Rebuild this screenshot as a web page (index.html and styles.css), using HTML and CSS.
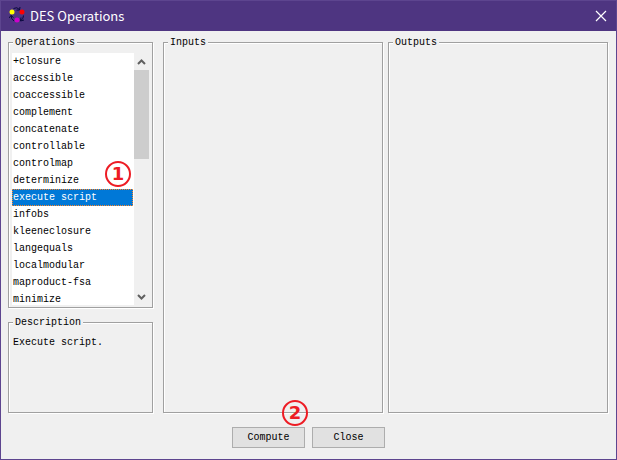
FILE: index.html
```html
<!DOCTYPE html>
<html lang="en">
<head>
<meta charset="utf-8">
<title>DES Operations</title>
<link rel="stylesheet" href="styles.css">
</head>
<body>
<div class="window">
  <header class="titlebar">
    <svg class="app-icon" viewBox="0 0 18 18" width="18" height="18" aria-hidden="true">
      <g fill="none" stroke="#08083c" stroke-width="1">
        <path d="M4.500 1.500Q8 -0.500 10.500 2.500M11 0L10.500 3L7.500 3"/>
        <path d="M14.500 8.500Q14.500 11.500 12 13.500M15 13L11.500 14L12 10.500"/>
        <path d="M5 14Q2 12 2 8.500M0 11L2 8.500L4.500 10.500"/>
      </g>
      <circle cx="3" cy="5" r="2.500" fill="#ffff00"/>
      <circle cx="13" cy="5" r="2.500" fill="#ff0000"/>
      <circle cx="8" cy="13" r="2.500" fill="#cc00cc"/>
    </svg>
    <h1 class="title">DES Operations</h1>
    <button class="close" type="button" aria-label="Close window">
      <svg viewBox="0 0 12 12" width="12" height="12"><path d="M1 1L11 11M11 1L1 11" stroke="#fff" stroke-width="1.200" fill="none"/></svg>
    </button>
  </header>
  <main class="content">
    <div class="panels">
      <div class="sidebar">
        <fieldset class="group operations">
          <legend><label for="ops">Operations</label></legend>
          <div class="list-row">
            <select class="list" id="ops" size="15">
              <option>+closure</option>
              <option>accessible</option>
              <option>coaccessible</option>
              <option>complement</option>
              <option>concatenate</option>
              <option>controllable</option>
              <option>controlmap</option>
              <option>determinize</option>
              <option class="current" selected>execute script</option>
              <option>infobs</option>
              <option>kleeneclosure</option>
              <option>langequals</option>
              <option>localmodular</option>
              <option>maproduct-fsa</option>
              <option>minimize</option>
            </select>
            <div class="scrollbar">
              <button class="arrow" type="button" aria-label="Scroll up">
                <svg viewBox="0 0 9 6" width="9" height="6"><path d="M1 5L4.500 1.500L8 5" fill="none" stroke="#606060" stroke-width="2"/></svg>
              </button>
              <div class="track"><div class="thumb"></div></div>
              <button class="arrow" type="button" aria-label="Scroll down">
                <svg viewBox="0 0 9 6" width="9" height="6"><path d="M1 1L4.500 4.500L8 1" fill="none" stroke="#606060" stroke-width="2"/></svg>
              </button>
            </div>
            <span class="marker marker-list">1</span>
          </div>
        </fieldset>
        <fieldset class="group description">
          <legend>Description</legend>
          <p class="text">Execute script.</p>
        </fieldset>
      </div>
      <div class="ports">
        <fieldset class="group"><legend>Inputs</legend></fieldset>
        <fieldset class="group"><legend>Outputs</legend></fieldset>
      </div>
    </div>
    <div class="actions">
      <button class="button" type="button">Compute<span class="marker marker-compute">2</span></button>
      <button class="button" type="button">Close</button>
    </div>
  </main>
</div>
</body>
</html>
```
FILE: styles.css
```css
* {
  box-sizing: border-box;
}

body {
  margin: 0;
  font: 10px/14px "Liberation Mono", monospace;
  color: #000;
}

button,
select {
  font: inherit;
  color: inherit;
}

.window {
  display: flex;
  flex-direction: column;
  min-height: 100vh;
  border: 1px solid #5d458f;
  background: #f0f0f0;
}

.titlebar {
  display: flex;
  align-items: center;
  height: 30px;
  padding: 0 9px 0 8px;
  background: #4e3581;
  color: #fff;
}

.app-icon {
  margin-right: 3px;
}

.title {
  flex: 1;
  margin: 0;
  font: 13px/20px "Noto Sans CJK SC", sans-serif;
}

.close {
  display: flex;
  padding: 0;
  border: 0;
  background: none;
}

.content {
  flex: 1;
  display: flex;
  flex-direction: column;
  gap: 14px;
  padding: 4px 7px 11px;
}

.panels {
  flex: 1;
  display: grid;
  grid-template-columns: 145px 1fr;
  gap: 10px;
}

.sidebar {
  display: flex;
  flex-direction: column;
  gap: 7px;
}

.ports {
  display: grid;
  grid-template-columns: 1fr 1fr;
  gap: 5px;
  padding-right: 1px;
}

.group {
  min-width: 0;
  margin: 0;
  padding: 4px 3px 2px;
  border: 1px solid #a0a0a0;
  box-shadow: 1px 1px #fff, inset 1px 1px #fff;
}

.group legend {
  margin-left: 1px;
  padding: 2px 2px 0;
  line-height: 12px;
  background: #f0f0f0;
}

.list-row {
  position: relative;
  display: flex;
  height: 252px;
}

.list {
  flex: 1;
  min-width: 0;
  height: 100%;
  padding: 0 1px 0 0;
  border: 0;
  border-radius: 0;
  outline: 0;
  overflow: hidden;
  background: #fff;
}

.list option {
  height: 17px;
  min-height: 17px;
  padding: 3px 1px 0;
}

.list .current {
  padding: 2px 0 0;
  border: 1px dotted #ff8728;
  background: #0078d7 linear-gradient(#0078d7, #0078d7);
  color: #fff;
}

.scrollbar {
  display: flex;
  flex-direction: column;
  width: 15px;
}

.arrow {
  display: flex;
  align-items: center;
  justify-content: center;
  height: 17px;
  padding: 0;
  border: 0;
  background: none;
}

.track {
  flex: 1;
}

.thumb {
  height: 41%;
  background: #cdcdcd;
}

.description {
  flex: 1;
}

.text {
  margin: 0;
  padding: 3px 1px;
}

.actions {
  display: flex;
  justify-content: center;
  gap: 7px;
}

.button {
  position: relative;
  width: 73px;
  height: 21px;
  padding: 0;
  border: 1px solid #adadad;
  background: #e1e1e1;
}

.marker {
  position: absolute;
  width: 26px;
  height: 26px;
  border: 2px solid #ed1c24;
  border-radius: 50%;
  font: bold 18px/22px "DejaVu Sans", sans-serif;
  text-align: center;
  color: #ed1c24;
  pointer-events: none;
}

.marker-list {
  top: 108px;
  right: 18px;
}

.marker-compute {
  top: -28px;
  right: -4px;
}
```
